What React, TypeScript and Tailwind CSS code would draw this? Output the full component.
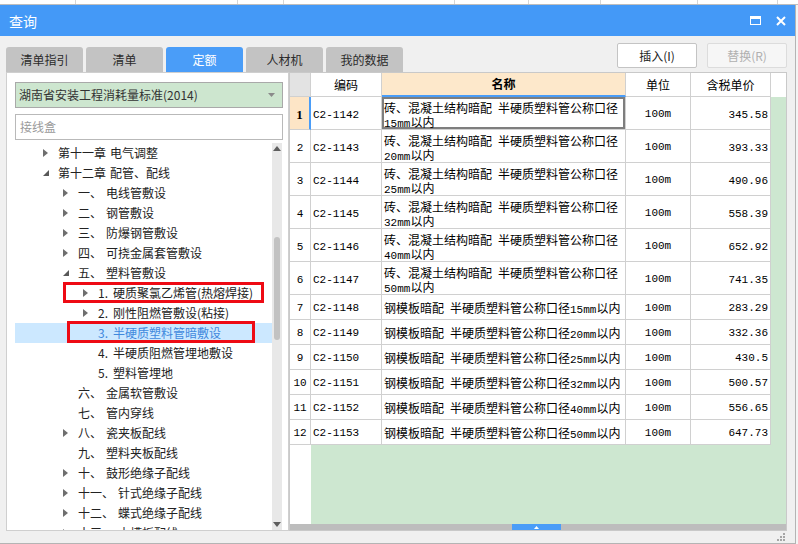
import React from 'react';

const F = "font-['Noto_Sans_CJK_SC','Noto_Sans',sans-serif]";

function ArrowRight() {
  return (
    <svg width="5" height="8" viewBox="0 0 5 8">
      <path d="M0 0 L5 4 L0 8 Z" fill="#6e6e6e" />
    </svg>
  );
}
function ArrowDown() {
  return (
    <svg width="6" height="6" viewBox="0 0 6 6">
      <path d="M6 0 L6 6 L0 6 Z" fill="#585858" />
    </svg>
  );
}

function Mixed({ s }: { s: string }) {
  const parts = s.split(/([\x21-\x7e]+)/);
  return (
    <>
      {parts.map((p, i) =>
        /[\x21-\x7e]/.test(p) ? (
          <span key={i} className="font-['Liberation_Mono','DejaVu_Sans_Mono',monospace] text-[11px]">
            {p}
          </span>
        ) : (
          <React.Fragment key={i}>{p}</React.Fragment>
        )
      )}
    </>
  );
}

type Node = { lvl: 1 | 2 | 3; arrow: 'r' | 'd' | null; t: string; n: string; sel?: boolean };

const tree: Node[] = [
  { lvl: 1, arrow: 'r', t: '第十一章', n: '电气调整' },
  { lvl: 1, arrow: 'd', t: '第十二章', n: '配管、配线' },
  { lvl: 2, arrow: 'r', t: '一、', n: '电线管敷设' },
  { lvl: 2, arrow: 'r', t: '二、', n: '钢管敷设' },
  { lvl: 2, arrow: 'r', t: '三、', n: '防爆钢管敷设' },
  { lvl: 2, arrow: 'r', t: '四、', n: '可挠金属套管敷设' },
  { lvl: 2, arrow: 'd', t: '五、', n: '塑料管敷设' },
  { lvl: 3, arrow: 'r', t: '1.', n: '硬质聚氯乙烯管(热熔焊接)' },
  { lvl: 3, arrow: 'r', t: '2.', n: '刚性阻燃管敷设(粘接)' },
  { lvl: 3, arrow: null, t: '3.', n: '半硬质塑料管暗敷设', sel: true },
  { lvl: 3, arrow: null, t: '4.', n: '半硬质阻燃管埋地敷设' },
  { lvl: 3, arrow: null, t: '5.', n: '塑料管埋地' },
  { lvl: 2, arrow: null, t: '六、', n: '金属软管敷设' },
  { lvl: 2, arrow: null, t: '七、', n: '管内穿线' },
  { lvl: 2, arrow: 'r', t: '八、', n: '瓷夹板配线' },
  { lvl: 2, arrow: null, t: '九、', n: '塑料夹板配线' },
  { lvl: 2, arrow: 'r', t: '十、', n: '鼓形绝缘子配线' },
  { lvl: 2, arrow: 'r', t: '十一、', n: '针式绝缘子配线' },
  { lvl: 2, arrow: 'r', t: '十二、', n: '蝶式绝缘子配线' },
  { lvl: 2, arrow: 'r', t: '十三、', n: '木槽板配线' },
];

const indent: Record<number, string> = { 1: 'pl-[28px]', 2: 'pl-[48px]', 3: 'pl-[68px]' };

const rows: [string, string, string][] = [
  ['C2-1142', '砖、混凝土结构暗配\u2002半硬质塑料管公称口径15mm以内', '345.58'],
  ['C2-1143', '砖、混凝土结构暗配\u2002半硬质塑料管公称口径20mm以内', '393.33'],
  ['C2-1144', '砖、混凝土结构暗配\u2002半硬质塑料管公称口径25mm以内', '490.96'],
  ['C2-1145', '砖、混凝土结构暗配\u2002半硬质塑料管公称口径32mm以内', '558.39'],
  ['C2-1146', '砖、混凝土结构暗配\u2002半硬质塑料管公称口径40mm以内', '652.92'],
  ['C2-1147', '砖、混凝土结构暗配\u2002半硬质塑料管公称口径50mm以内', '741.35'],
  ['C2-1148', '钢模板暗配\u2002半硬质塑料管公称口径15mm以内', '283.29'],
  ['C2-1149', '钢模板暗配\u2002半硬质塑料管公称口径20mm以内', '332.36'],
  ['C2-1150', '钢模板暗配\u2002半硬质塑料管公称口径25mm以内', '430.5'],
  ['C2-1151', '钢模板暗配\u2002半硬质塑料管公称口径32mm以内', '500.57'],
  ['C2-1152', '钢模板暗配\u2002半硬质塑料管公称口径40mm以内', '556.65'],
  ['C2-1153', '钢模板暗配\u2002半硬质塑料管公称口径50mm以内', '647.73'],
];

const tabs = ['清单指引', '清单', '定额', '人材机', '我的数据'];

export default function App() {
  return (
    <div className={`w-[798px] h-[544px] overflow-hidden bg-[#fbfbfb] flex flex-col ${F}`}>
      {/* background sheet strip */}
      <div className="h-[5px] shrink-0 flex border-b border-[#bdbdbd] bg-white">
        <div className="w-[76px] border-r border-[#d6d6d6]" />
        <div className="w-[162px] border-r border-[#d6d6d6]" />
        <div className="w-[46px] border-r border-[#d6d6d6]" />
        <div className="w-[171px] border-r border-[#d6d6d6]" />
        <div className="w-[74px] border-r border-[#d6d6d6]" />
        <div className="w-[72px] border-r border-[#d6d6d6]" />
        <div className="w-[97px] border-r border-[#d6d6d6]" />
        <div className="w-[80px] border-r border-[#d6d6d6]" />
        <div className="flex-1" />
      </div>
      <div className="flex flex-1 min-h-0">
        {/* dialog */}
        <div className="w-[796px] shrink-0 flex flex-col bg-[#f0f0f0] border-r border-b border-[#b4b4b4]">
          {/* title bar */}
          <div className="h-[31px] shrink-0 bg-[#4499f7] flex items-center pl-[9px] pr-[9px]">
            <span className="text-white text-[14px] leading-none">查询</span>
            <div className="ml-auto flex items-center gap-[15px]">
              <div className="w-[11px] h-[9px] border border-white border-t-[3px]" />
              <svg width="10" height="10" viewBox="0 0 10 10">
                <path d="M1 1 L9 9 M9 1 L1 9" stroke="#fff" strokeWidth="2" />
              </svg>
            </div>
          </div>
          {/* body */}
          <div className="flex-1 flex flex-col pl-[6px] pr-[8px]">
            {/* tabs + buttons */}
            <div className="h-[36px] shrink-0 flex items-end">
              <div className="flex gap-[3px]">
                {tabs.map((t, i) => (
                  <div
                    key={t}
                    className={`w-[77px] h-[25px] rounded-t-[3px] flex items-center justify-center text-[12px] ${
                      i === 2 ? 'bg-[#4a9df8] text-white' : 'bg-[#c3c3c3] text-[#2b2b2b]'
                    }`}
                  >
                    {t}
                  </div>
                ))}
              </div>
              <div className="ml-auto mb-[4px] flex gap-[10px]">
                <div className="w-[80px] h-[25px] bg-white border border-[#c4c4c4] rounded-[2px] flex items-center justify-center text-[12px] text-[#222]">
                  插入(I)
                </div>
                <div className="w-[80px] h-[25px] bg-[#f6f6f6] border border-[#dcdcdc] rounded-[2px] flex items-center justify-center text-[12px] text-[#b0b0b0]">
                  替换(R)
                </div>
              </div>
            </div>
            {/* main */}
            <div className="h-[459px] shrink-0 flex">
              {/* left panel */}
              <div className="w-[283px] shrink-0 bg-white border border-[#cfcfcf] flex flex-col pl-[8px] pr-[5px] pt-[9px]">
                <div className="h-[26px] shrink-0 bg-[#cde6cf] border border-[#a9a9a9] flex items-center pl-[3px] pr-[7px] text-[12px] text-[#333]">
                  <span>湖南省安装工程消耗量标准(2014)</span>
                  <svg className="ml-auto" width="7" height="4" viewBox="0 0 7 4">
                    <path d="M0 0 L7 0 L3.5 4 Z" fill="#8a8a8a" />
                  </svg>
                </div>
                <div className="mt-[6px] h-[26px] shrink-0 bg-white border border-[#b9b9b9] flex items-center pl-[4px] text-[12px] text-[#9a9a9a]">
                  接线盒
                </div>
                <div className="mt-[3px] flex-1 min-h-0 flex">
                  <div className="relative w-[257px] overflow-hidden text-[12px]">
                    {tree.map((r, i) => (
                      <div
                        key={i}
                        className={`h-[20px] flex items-center whitespace-nowrap ${indent[r.lvl]} ${
                          r.sel ? 'bg-[#cce8ff] text-[#3f88dd]' : 'text-[#222]'
                        }`}
                      >
                        <span className="w-[15px] shrink-0 flex items-center">
                          {r.arrow === 'r' && <ArrowRight />}
                          {r.arrow === 'd' && <ArrowDown />}
                        </span>
                        <span>{r.t}</span>
                        <span className={r.lvl === 3 ? 'ml-[5px]' : 'ml-[4px]'}>{r.n}</span>
                      </div>
                    ))}
                    <div className="absolute left-[48px] top-[139px] w-[201px] h-[21px] border-[3px] border-[#ee0a14]" />
                    <div className="absolute left-[52px] top-[178px] w-[188px] h-[22px] border-[3px] border-[#ee0a14]" />
                  </div>
                  <div className="w-[10px] shrink-0 bg-[#e8e8e8] flex flex-col items-center">
                    <svg className="mt-[3px]" width="8" height="5" viewBox="0 0 8 5">
                      <path d="M0 5 L4 0 L8 5 Z" fill="#5e5e5e" />
                    </svg>
                    <div className="mt-[86px] w-[6px] h-[103px] rounded-[3px] bg-[#c2c2c2]" />
                    <svg className="mt-auto mb-[3px]" width="8" height="5" viewBox="0 0 8 5">
                      <path d="M0 0 L8 0 L4 5 Z" fill="#5e5e5e" />
                    </svg>
                  </div>
                </div>
              </div>
              {/* right panel */}
              <div className="w-[498px] shrink-0 border border-[#c9c9c9] bg-[#cde7d0] flex flex-col text-[12px] text-black">
                {/* header */}
                <div className="h-[24px] shrink-0 flex">
                  <div className="w-[21px] border-r border-b border-[#d0d0d0] bg-[#e3e3e3]" />
                  <div className="w-[71px] border-r border-b border-[#d0d0d0] bg-white flex items-center justify-center">编码</div>
                  <div className="w-[244px] border-r border-[#d0d0d0] border-b-2 border-b-[#4a9df8] bg-[#fde8cb] flex items-center justify-center font-bold">名称</div>
                  <div className="w-[65px] border-r border-b border-[#d0d0d0] bg-white flex items-center justify-center">单位</div>
                  <div className="w-[80px] border-r border-b border-[#d0d0d0] bg-white flex items-center justify-center">含税单价</div>
                  <div className="flex-1 bg-white" />
                </div>
                {rows.map((r, i) => {
                  const tall = i < 6;
                  const first = i === 0;
                  return (
                    <div key={r[0]} className={`${tall ? 'h-[33px]' : 'h-[25px]'} shrink-0 flex`}>
                      <div
                        className={`w-[21px] border-b border-[#d0d0d0] flex items-center justify-center ${
                          tall ? 'pt-[4px]' : 'pt-[3px]'
                        } ${first ? 'bg-[#fde5c6] font-bold border-r-2 border-r-[#4a9df8]' : 'bg-white border-r'}`}
                      >
                        {first ? <span className="font-['Liberation_Serif',serif] text-[13px]">1</span> : <Mixed s={String(i + 1)} />}
                      </div>
                      <div className={`w-[71px] border-r border-b border-[#d0d0d0] bg-white flex items-center pl-[2px] ${tall ? 'pt-[4px]' : 'pt-[3px]'}`}>
                        <Mixed s={r[0]} />
                      </div>
                      <div
                        className={`w-[244px] border-r border-b border-[#d0d0d0] bg-white pl-[2px] overflow-hidden ${
                          tall ? 'pt-[4px] leading-[14px]' : 'flex items-center pt-[3px] whitespace-nowrap'
                        } ${first ? 'shadow-[inset_0_0_0_2px_#7e7e7e]' : ''}`}
                      >
                        {tall ? <Mixed s={r[1]} /> : <span><Mixed s={r[1]} /></span>}
                      </div>
                      <div className="w-[65px] border-r border-b border-[#d0d0d0] bg-white flex items-center justify-center pt-[3px]">
                        <Mixed s="100m" />
                      </div>
                      <div className={`w-[80px] border-r border-b border-[#d0d0d0] bg-white flex items-center justify-end pr-[2px] ${tall ? 'pt-[4px]' : 'pt-[3px]'}`}>
                        <Mixed s={r[2]} />
                      </div>
                      <div className="flex-1" />
                    </div>
                  );
                })}
                <div className="flex-1 flex">
                  <div className="w-[21px] bg-white" />
                  <div className="flex-1" />
                </div>
                {/* horizontal scroll */}
                <div className="h-[6px] shrink-0 bg-[#bdbdbd] flex">
                  <div className="w-[222px]" />
                  <div className="w-[49px] bg-[#4a9df8] flex items-center justify-center">
                    <svg width="5" height="3" viewBox="0 0 5 3">
                      <path d="M0 3 L2.5 0 L5 3 Z" fill="#fff" />
                    </svg>
                  </div>
                </div>
              </div>
            </div>
            {/* bottom status with grip */}
            <div className="flex-1 flex justify-end items-start pt-[2px] pr-[1px]">
              <svg width="9" height="9" viewBox="0 0 9 9">
                <rect x="6" y="0" width="2" height="2" fill="#a6a6a6" />
                <rect x="3" y="3" width="2" height="2" fill="#a6a6a6" />
                <rect x="6" y="3" width="2" height="2" fill="#a6a6a6" />
                <rect x="0" y="6" width="2" height="2" fill="#a6a6a6" />
                <rect x="3" y="6" width="2" height="2" fill="#a6a6a6" />
                <rect x="6" y="6" width="2" height="2" fill="#a6a6a6" />
              </svg>
            </div>
          </div>
        </div>
        <div className="flex-1 bg-[#f4f4f4]" />
      </div>
    </div>
  );
}
